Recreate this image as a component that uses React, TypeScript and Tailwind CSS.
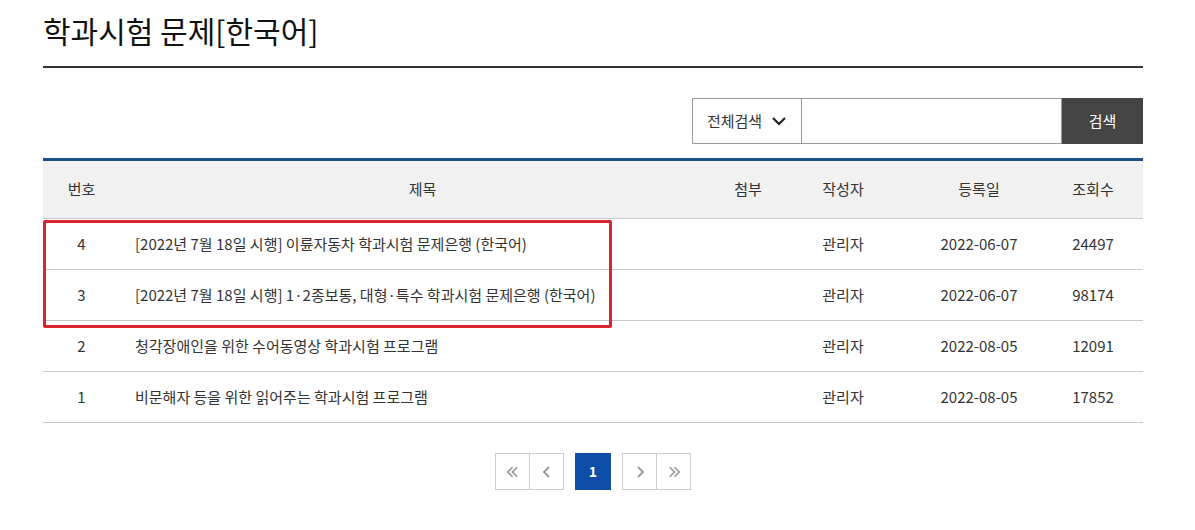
import React from 'react';

const rows = [
  { no: 4, title: '[2022년 7월 18일 시행] 이륜자동차 학과시험 문제은행 (한국어)', writer: '관리자', date: '2022-06-07', views: 24497 },
  { no: 3, title: '[2022년 7월 18일 시행] 1·2종보통, 대형·특수 학과시험 문제은행 (한국어)', writer: '관리자', date: '2022-06-07', views: 98174 },
  { no: 2, title: '청각장애인을 위한 수어동영상 학과시험 프로그램', writer: '관리자', date: '2022-08-05', views: 12091 },
  { no: 1, title: '비문해자 등을 위한 읽어주는 학과시험 프로그램', writer: '관리자', date: '2022-08-05', views: 17852 },
];

const font = { fontFamily: '"Noto Sans CJK KR", "Noto Sans", sans-serif' };

function Chevron({ dir, double }: { dir: 'left' | 'right'; double?: boolean }) {
  const d = dir === 'left' ? 'M9 3L4 8l5 5' : 'M5 3l5 5-5 5';
  const d2 = dir === 'left' ? 'M14 3L9 8l5 5' : 'M10 3l5 5-5 5';
  return (
    <svg width={double ? 18 : 14} height="16" viewBox={double ? '0 0 19 16' : '0 0 14 16'} fill="none" stroke="#999" strokeWidth="1.8">
      <path d={d} />
      {double && <path d={d2} />}
    </svg>
  );
}

export default function App() {
  return (
    <div className="w-[1195px] h-[530px] bg-white text-[#333]" style={font}>
      <div className="mx-[43px] w-[1100px]">
        <h1 className="pt-[10px] h-[68px] text-[30px] leading-[40px] text-[#111] border-b-2 border-[#333]">
          학과시험 문제[한국어]
        </h1>

        <div className="flex justify-end mt-[30px]">
          <div className="flex h-[46px]">
            <button className="w-[110px] flex items-center justify-center gap-[9px] border border-[#999] text-[15px] text-[#333]">
              전체검색
              <svg width="16" height="10" viewBox="0 0 16 10" fill="none" stroke="#222" strokeWidth="2.2">
                <path d="M2 2l6 6 6-6" />
              </svg>
            </button>
            <div className="w-[260px] border border-l-0 border-[#999]" />
            <button className="w-[81px] bg-[#444] text-white text-[15px]">검색</button>
          </div>
        </div>

        <div className="relative mt-[14px]">
          <table className="w-full border-t-[3px] border-[#1f4e8c] text-[15px] table-fixed">
            <colgroup>
              <col className="w-[77px]" />
              <col />
              <col className="w-[46px]" />
              <col className="w-[144px]" />
              <col className="w-[128px]" />
              <col className="w-[100px]" />
            </colgroup>
            <thead>
              <tr className="bg-[#f1f1f1] h-[59px] border-b border-[#c9c9c9]">
                <th className="font-normal">번호</th>
                <th className="font-normal">제목</th>
                <th className="font-normal">첨부</th>
                <th className="font-normal">작성자</th>
                <th className="font-normal">등록일</th>
                <th className="font-normal">조회수</th>
              </tr>
            </thead>
            <tbody>
              {rows.map((r) => (
                <tr key={r.no} className="h-[51px] border-b border-[#c9c9c9]">
                  <td className="text-center">{r.no}</td>
                  <td className="pl-[15px] whitespace-nowrap">{r.title}</td>
                  <td />
                  <td className="text-center">{r.writer}</td>
                  <td className="text-center">{r.date}</td>
                  <td className="text-center">{r.views}</td>
                </tr>
              ))}
            </tbody>
          </table>
          <div className="absolute left-0 top-[62px] w-[569px] h-[108px] border-[3px] border-[#dc2430] rounded-[2px]" />
        </div>

        <div className="flex justify-center gap-[11px] mt-[30px]">
          <div className="flex border border-[#ccc]">
            <div className="w-[34px] h-[35px] flex items-center justify-center border-r border-[#ccc]">
              <Chevron dir="left" double />
            </div>
            <div className="w-[33px] h-[35px] flex items-center justify-center">
              <Chevron dir="left" />
            </div>
          </div>
          <div className="w-[36px] h-[37px] bg-[#0d4fa8] text-white text-[14px] font-bold flex items-center justify-center">1</div>
          <div className="flex border border-[#ccc]">
            <div className="w-[34px] h-[35px] flex items-center justify-center border-r border-[#ccc]">
              <Chevron dir="right" />
            </div>
            <div className="w-[33px] h-[35px] flex items-center justify-center">
              <Chevron dir="right" double />
            </div>
          </div>
        </div>
      </div>
    </div>
  );
}
